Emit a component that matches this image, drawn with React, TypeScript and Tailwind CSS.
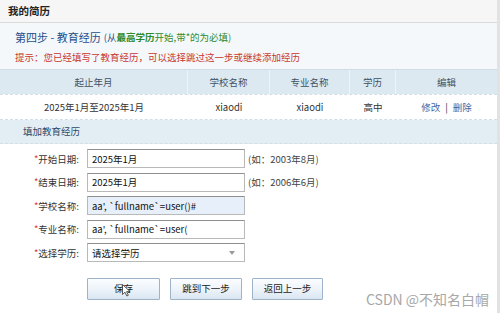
import React from "react";

const font = "font-['Noto_Sans_CJK_SC','Microsoft_YaHei',sans-serif]";

function Label({ text }: { text: string }) {
  return (
    <div className="w-[80px] text-right text-[9.5px] text-[#333] pr-[1px]">
      <span className="text-[#d33]">*</span>
      {text}:
    </div>
  );
}

function Field({ children, blue }: { children?: React.ReactNode; blue?: boolean }) {
  return (
    <div
      className={`ml-[7px] w-[158px] h-[19px] border border-[#b9b9b9] border-t-[#8f8f8f] flex items-center px-[4px] text-[9.5px] text-[#111] ${
        blue ? "bg-[#e7effb]" : "bg-white"
      }`}
    >
      {children}
    </div>
  );
}

function Btn({ text, w }: { text: string; w: string }) {
  return (
    <div
      className={`${w} h-[22px] border border-[#9fb3c8] rounded-[1px] bg-gradient-to-b from-[#fbfdff] via-[#eef4fa] to-[#d9e6f2] flex items-center justify-center text-[9.5px] text-[#222]`}
    >
      {text}
    </div>
  );
}

export default function App() {
  return (
    <div className={`relative w-[500px] h-[313px] bg-white overflow-hidden ${font}`}>
      <div className="border-r-[3px] border-[#e2e2e2] h-full">
        {/* title bar */}
        <div className="h-[23px] bg-[#f6f6f6] border-b border-[#dadada] flex items-center pl-[8px] text-[10.5px] font-bold text-[#222]">
          我的简历
        </div>
        {/* step info */}
        <div className="h-[46px] bg-[#f4f8fb] pl-[15px] flex flex-col pt-[5px]">
          <div className="h-[18px] flex items-center text-[11px] text-[#1e4f8c]">
            第四步 - 教育经历
            <span className="ml-[3px] text-[9.5px]">
              <span className="text-[#1e4f8c]">(从</span>
              <span className="text-[#2d8a2d] font-bold">最高学历</span>
              <span className="text-[#2d8a2d]">开始,带*的为必填)</span>
            </span>
          </div>
          <div className="h-[18px] mt-[2px] flex items-center text-[9.5px] text-[#c8382e]">
            提示：您已经填写了教育经历，可以选择跳过这一步或继续添加经历
          </div>
        </div>
        {/* table header */}
        <div className="h-[25px] bg-[#dde9f1] border-t border-[#cfdde8] grid grid-cols-[188px_82px_80px_46px_1fr] text-[9.5px] text-[#3f5163]">
          <div className="flex items-center justify-center border-r border-[#eef4f8]">起止年月</div>
          <div className="flex items-center justify-center border-r border-[#eef4f8]">学校名称</div>
          <div className="flex items-center justify-center border-r border-[#eef4f8]">专业名称</div>
          <div className="flex items-center justify-center border-r border-[#eef4f8]">学历</div>
          <div className="flex items-center justify-center">编辑</div>
        </div>
        {/* data row */}
        <div className="h-[26px] bg-white border-t border-b border-dashed border-[#d3dde5] grid grid-cols-[188px_82px_80px_46px_1fr] text-[9.5px] text-[#333]">
          <div className="flex items-center justify-center">2025年1月至2025年1月</div>
          <div className="flex items-center justify-center">xiaodi</div>
          <div className="flex items-center justify-center">xiaodi</div>
          <div className="flex items-center justify-center">高中</div>
          <div className="flex items-center justify-center text-[#3a6aa6]">
            修改<span className="mx-[5px] text-[#333]">|</span>删除
          </div>
        </div>
        {/* add row */}
        <div className="h-[24px] bg-[#e2edf4] border-b border-dashed border-[#d3dde5] flex items-center pl-[23px] text-[9.5px] text-[#2f4a66]">
          填加教育经历
        </div>
        {/* form */}
        <div className="pt-[3px] flex flex-col">
          <div className="h-[23.5px] flex items-center">
            <Label text="开始日期" />
            <Field>2025年1月</Field>
            <div className="ml-[3px] text-[9.5px] text-[#444]">(如：2003年8月)</div>
          </div>
          <div className="h-[23.5px] flex items-center">
            <Label text="结束日期" />
            <Field>2025年1月</Field>
            <div className="ml-[3px] text-[9.5px] text-[#444]">(如：2006年6月)</div>
          </div>
          <div className="h-[23.5px] flex items-center">
            <Label text="学校名称" />
            <Field blue>aa', `fullname`=user()#</Field>
          </div>
          <div className="h-[23.5px] flex items-center">
            <Label text="专业名称" />
            <Field>aa', `fullname`=user(</Field>
          </div>
          <div className="h-[23.5px] flex items-center">
            <Label text="选择学历" />
            <div className="ml-[7px] w-[158px] h-[19px] border border-[#b9b9b9] border-t-[#8f8f8f] bg-white flex items-center justify-between px-[4px] text-[9.5px] text-[#111]">
              <span>请选择学历</span>
              <svg width="6" height="4" viewBox="0 0 6 4" className="mr-[5px]">
                <path d="M0 0 L6 0 L3 4 Z" fill="#9a9a9a" />
              </svg>
            </div>
          </div>
          <div className="mt-[13px] flex items-center pl-[87px] gap-[10px]">
            <Btn text="保存" w="w-[73px]" />
            <Btn text="跳到下一步" w="w-[72px]" />
            <Btn text="返回上一步" w="w-[71px]" />
          </div>
        </div>
      </div>
      {/* mouse cursor */}
      <svg className="absolute left-[122px] top-[284px]" width="9" height="13" viewBox="0 0 9 13">
        <path d="M0.5 0.5 L0.5 10.5 L3 8.2 L4.8 12 L6.3 11.3 L4.6 7.6 L8 7.6 Z" fill="#fff" stroke="#333" strokeWidth="0.8" />
      </svg>
      {/* watermark */}
      <div className="absolute left-[366px] top-[290px] text-[14px] leading-[18px] text-[#a8a8a8] font-['Noto_Sans_CJK_SC',sans-serif]">
        CSDN @不知名白帽
      </div>
    </div>
  );
}
